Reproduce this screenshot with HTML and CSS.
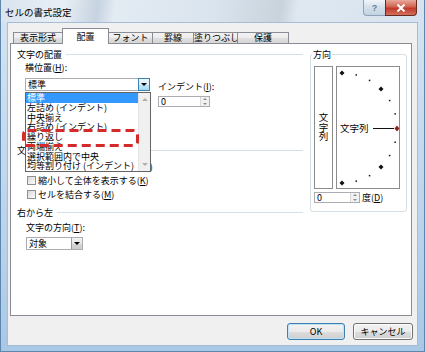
FILE: index.html
```html
<!DOCTYPE html>
<html lang="ja">
<head>
    <meta charset="UTF-8">
    <meta name="viewport" content="width=device-width, initial-scale=1.0">
    <title>セルの書式設定</title>
    <link rel="stylesheet" href="styles.css">
</head>
<body>
    <div class="window">
        <div class="titlebar">
            <span class="title">セルの書式設定</span>
            <div class="caption-buttons">
                <span class="cap-btn help">?</span>
                <span class="cap-btn close">
                    <svg width="10" height="8" viewBox="0 0 10 8"><path d="M1.5 0.5 L8.5 7.5 M8.5 0.5 L1.5 7.5" stroke="#fff" stroke-width="2"/></svg>
                </span>
            </div>
        </div>

        <div class="client">
            <div class="tabs">
                <span class="tab t1">表示形式</span>
                <span class="tab t2 active">配置</span>
                <span class="tab t3">フォント</span>
                <span class="tab t4">罫線</span>
                <span class="tab t5">塗りつぶし</span>
                <span class="tab t6">保護</span>
            </div>

            <div class="panel">
                <div class="left-col">
                    <div class="group-head"><span>文字の配置</span><i class="rule"></i></div>
                    <div class="align-row">
                        <div class="field h-align">
                            <div class="label">横位置(<u>H</u>):</div>
                            <div class="combo"><span class="value">標準</span><span class="drop hot"></span></div>
                        </div>
                        <div class="field indent">
                            <div class="label">インデント(<u>I</u>):</div>
                            <div class="spin"><span class="value">0</span><span class="spin-btn"><i class="up"></i><i class="down"></i></span></div>
                        </div>
                    </div>

                    <div class="group-head control-head"><span>文字の制御</span><i class="rule"></i></div>
                    <div class="check first"><span class="box"></span>折り返して全体を表示する(<u>W</u>)</div>
                    <div class="check"><span class="box"></span>縮小して全体を表示する(<u>K</u>)</div>
                    <div class="check"><span class="box"></span>セルを結合する(<u>M</u>)</div>

                    <div class="group-head rtl-head"><span>右から左</span><i class="rule"></i></div>
                    <div class="field dir">
                        <div class="label">文字の方向(<u>T</u>):</div>
                        <div class="combo short"><span class="value">対象</span><span class="drop"></span></div>
                    </div>
                </div>

                <fieldset class="orient">
                    <legend>方向</legend>
                    <div class="orient-body">
                        <div class="vertical"><span>文字列</span></div>
                        <div class="dial">
                            <svg width="62" height="121" viewBox="0 0 62 121">
                                <g fill="#111">
                                    <path d="M5 3.5 L7.5 6 L5 8.5 L2.5 6 Z"/>
                                    <path d="M44 19.6 L46.5 22.1 L44 24.6 L41.5 22.1 Z"/>
                                    <path d="M44 97.4 L46.5 99.9 L44 102.4 L41.5 99.9 Z"/>
                                    <path d="M5 113.5 L7.5 116 L5 118.5 L2.5 116 Z"/>
                                    <rect x="18.5" y="7.2" width="1.5" height="1.5"/>
                                    <rect x="31.8" y="12.7" width="1.5" height="1.5"/>
                                    <rect x="51.9" y="32.8" width="1.5" height="1.5"/>
                                    <rect x="57.4" y="46.1" width="1.5" height="1.5"/>
                                    <rect x="57.4" y="74.5" width="1.5" height="1.5"/>
                                    <rect x="51.9" y="87.8" width="1.5" height="1.5"/>
                                    <rect x="31.8" y="107.9" width="1.5" height="1.5"/>
                                    <rect x="18.5" y="113.4" width="1.5" height="1.5"/>
                                </g>
                                <text x="3" y="64.5" font-size="9.5" font-family="Noto Sans CJK JP, sans-serif">文字列</text>
                                <line x1="36" y1="61.5" x2="57" y2="61.5" stroke="#111" stroke-width="1"/>
                                <path d="M60 58.5 L62.5 61.5 L60 64.5 L57.5 61.5 Z" fill="#8a2020"/>
                            </svg>
                        </div>
                    </div>
                    <div class="deg-row">
                        <div class="spin deg"><span class="value">0</span><span class="spin-btn"><i class="up"></i><i class="down"></i></span></div>
                        <span class="unit">度(<u>D</u>)</span>
                    </div>
                </fieldset>

                <!-- open list of 横位置 -->
                <div class="dropdown">
                    <ul class="items">
                        <li class="selected">標準</li>
                        <li>左詰め (インデント)</li>
                        <li>中央揃え</li>
                        <li>右詰め (インデント)</li>
                        <li>繰り返し</li>
                        <li>両端揃え</li>
                        <li>選択範囲内で中央</li>
                        <li>均等割り付け (インデント)</li>
                    </ul>
                    <div class="scrollbar"><i class="arrow up"></i><i class="arrow down"></i></div>
                </div>

                <svg class="highlight" width="117" height="18" viewBox="0 0 117 18">
                    <rect x="1.5" y="1.5" width="114" height="15" rx="4" fill="none" stroke="#d42a2a" stroke-width="3" stroke-dasharray="9 5"/>
                </svg>
            </div>

            <div class="buttons">
                <button class="btn default">OK</button>
                <button class="btn cancel">キャンセル</button>
            </div>
        </div>
    </div>
</body>
</html>
```

FILE: styles.css
```css
* {
    box-sizing: border-box;
}

body {
    margin: 0;
    width: 425px;
    height: 352px;
    overflow: hidden;
    font-family: "Noto Sans CJK JP", "Liberation Sans", sans-serif;
    font-size: 9px;
    color: #000;
    background-color: #ffffff;
}

u {
    text-decoration: underline;
}

/* window frame */

.window {
    width: 425px;
    height: 352px;
    display: flex;
    flex-direction: column;
    padding: 0 6px 5px 6px;
    border: 1px solid #5f86ad;
    border-top: none;
    background: linear-gradient(180deg, #d6e4f1 0%, #bcd5ec 60%, #a9c8e6 100%);
}

.titlebar {
    height: 22px;
    margin: 0 -6px;
    padding: 0 7px 0 4px;
    display: flex;
    justify-content: space-between;
    align-items: flex-start;
    background: linear-gradient(100deg, #d9e4ef 0%, #e8eef5 15%, #c6d3e0 23%, #e3ebf3 27%, #dae4ee 50%, #c9d3dc 66%, #dfe8f1 70%, #d6e2ee 100%);
}

.title {
    margin-top: 7px;
    font-size: 9.5px;
    line-height: 11px;
}

.caption-buttons {
    display: flex;
}

.cap-btn {
    height: 16px;
    display: flex;
    align-items: center;
    justify-content: center;
}

.help {
    width: 22px;
    border: 1px solid #8ea3b9;
    border-top: none;
    border-right: none;
    border-radius: 0 0 0 4px;
    background: linear-gradient(#f1f5f9, #d3dfea 50%, #c3d3e3);
    color: #6d7f92;
    font-family: "Liberation Sans", sans-serif;
    font-weight: bold;
    font-size: 9px;
}

.close {
    width: 32px;
    border: 1px solid #6b2a20;
    border-top: none;
    border-radius: 0 0 4px 0;
    background: linear-gradient(#e9a99b, #d0634f 45%, #c0392b 55%, #d2705c);
}

.close svg {
    display: block;
}

/* client area */

.client {
    flex: 1;
    display: flex;
    flex-direction: column;
    padding: 5px 5px 0 2px;
    border: 1px solid #a5bdd6;
    background-color: #f0f0f0;
}

.tabs {
    display: flex;
    align-items: flex-end;
    height: 15px;
    padding-left: 3px;
}

.tab {
    height: 11px;
    margin-right: -1px;
    border: 1px solid #898c95;
    border-bottom: none;
    line-height: 10px;
    text-align: center;
    white-space: nowrap;
    background: linear-gradient(#f3f3f3, #ebebeb 50%, #dfdfdf 51%, #d6d6d6);
}

.t1 { width: 50px; }
.t2 { width: 47px; }
.t3 { width: 45px; }
.t4 { width: 42px; }
.t5 { width: 45px; }
.t6 { width: 52px; }

.tab.active {
    position: relative;
    z-index: 1;
    height: 16px;
    margin-bottom: -1px;
    padding-top: 3px;
    background: #ffffff;
}

.panel {
    position: relative;
    height: 273px;
    display: flex;
    gap: 7px;
    padding: 5px 4px 0 6px;
    border: 1px solid #898c95;
    background-color: #ffffff;
}

.left-col {
    width: 286px;
    flex: none;
}

.group-head {
    display: flex;
    align-items: center;
    height: 11px;
    line-height: 11px;
    white-space: nowrap;
}

.rule {
    flex: 1;
    height: 0;
    margin-left: 4px;
    border-top: 1px solid #d5dfe5;
}

.label {
    height: 11px;
    line-height: 11px;
    white-space: nowrap;
}

.align-row {
    display: flex;
    margin: 2px 0 0 8px;
}

.h-align {
    width: 125px;
}

.indent {
    width: 52px;
    margin: 19px 0 0 8px;
}

.combo {
    display: flex;
    height: 13px;
    margin-top: 5px;
    border: 1px solid #abadb3;
    background: #ffffff;
}

.combo .value {
    flex: 1;
    padding-left: 2px;
    line-height: 11px;
}

.drop {
    width: 11px;
    display: flex;
    align-items: center;
    justify-content: center;
    border-left: 1px solid #9a9a9a;
    background: linear-gradient(#f2f2f2, #e6e6e6 50%, #d6d6d6 51%, #cbcbcb);
}

.drop::after {
    content: "";
    border-left: 3px solid transparent;
    border-right: 3px solid transparent;
    border-top: 3px solid #000;
}

.drop.hot {
    border: 1px solid #3c7fb1;
    margin: -1px -1px -1px 0;
    width: 12px;
    background: linear-gradient(#eaf6fd, #d9f0fc 50%, #bee6fd 51%, #a7d9f5);
}

.spin {
    display: flex;
    height: 11px;
    margin-top: 4px;
    border: 1px solid #abadb3;
    background: #ffffff;
}

.spin .value {
    flex: 1;
    padding-left: 2px;
    line-height: 9px;
}

.spin-btn {
    width: 9px;
    display: flex;
    flex-direction: column;
    align-items: center;
    justify-content: space-around;
    border-left: 1px solid #d8d8d8;
    background: #f2f2f2;
}

.spin-btn .up {
    border-left: 2px solid transparent;
    border-right: 2px solid transparent;
    border-bottom: 2px solid #8a8a8a;
}

.spin-btn .down {
    border-left: 2px solid transparent;
    border-right: 2px solid transparent;
    border-top: 2px solid #8a8a8a;
}

.control-head {
    margin-top: 38px;
}

.check {
    display: flex;
    align-items: center;
    height: 14px;
    margin-left: 10px;
    white-space: nowrap;
}

.check.first {
    margin-top: 3px;
    letter-spacing: -0.5px;
}

.box {
    width: 9px;
    height: 9px;
    margin-right: 2px;
    border: 1px solid #8f8f8f;
    background: linear-gradient(135deg, #d8d8d8, #fbfbfb);
}

.rtl-head {
    margin-top: 6px;
}

.dir {
    margin: 4px 0 0 9px;
}

.dir .combo {
    margin-top: 4px;
}

.combo.short {
    width: 57px;
}

/* orientation box */

.orient {
    width: 97px;
    min-width: 0;
    margin: 0;
    padding: 6px 6px 8px 3px;
    align-self: flex-start;
    border: 1px solid #d5dfe5;
    border-radius: 3px;
}

.orient legend {
    margin-left: -2px;
    padding: 0 1px;
    line-height: 11px;
}

.orient-body {
    display: flex;
    gap: 3px;
    height: 123px;
}

.vertical {
    width: 19px;
    display: flex;
    align-items: center;
    justify-content: center;
    border: 1px solid #8c8c8c;
}

.vertical span {
    writing-mode: vertical-rl;
    text-orientation: upright;
    font-size: 9.5px;
    line-height: 10px;
}

.dial {
    width: 64px;
    border: 1px solid #8c8c8c;
}

.dial svg {
    display: block;
}

.deg-row {
    display: flex;
    align-items: center;
    height: 11px;
    margin-top: 3px;
}

.spin.deg {
    width: 46px;
    margin-top: 0;
}

.unit {
    margin-left: 2px;
    white-space: nowrap;
}

/* open drop-down list */

.dropdown {
    position: absolute;
    left: 14px;
    top: 48px;
    width: 126px;
    height: 80px;
    display: flex;
    border: 1px solid #646464;
    background: #ffffff;
    z-index: 2;
}

.items {
    flex: 1;
    margin: 0;
    padding: 0;
    list-style: none;
    overflow: hidden;
}

.items li {
    height: 9.75px;
    line-height: 9.75px;
    padding-left: 1px;
    white-space: nowrap;
}

.items li.selected {
    background-color: #3399ff;
    color: #ffffff;
}

.scrollbar {
    width: 12px;
    display: flex;
    flex-direction: column;
    align-items: center;
    justify-content: space-between;
    padding: 5px 0;
    border-left: 1px solid #e4e4e4;
    background: #f0f0f0;
}

.arrow.up {
    border-left: 3px solid transparent;
    border-right: 3px solid transparent;
    border-bottom: 3px solid #b0b0b0;
}

.arrow.down {
    border-left: 3px solid transparent;
    border-right: 3px solid transparent;
    border-top: 3px solid #b0b0b0;
}

.highlight {
    position: absolute;
    left: 11px;
    top: 85px;
    z-index: 3;
}

/* dialog buttons */

.buttons {
    display: flex;
    justify-content: flex-end;
    gap: 8px;
    margin-top: 7px;
    margin-right: -1px;
}

.btn {
    height: 17px;
    padding: 0;
    font-family: inherit;
    font-size: 9px;
    color: #000;
    border: 1px solid #707070;
    border-radius: 3px;
    background: linear-gradient(#f2f2f2, #ebebeb 50%, #dddddd 51%, #cfcfcf);
    box-shadow: inset 0 0 0 1px #fcfcfc;
}

.btn.default {
    width: 58px;
    border-color: #3c7fb1;
    box-shadow: inset 0 0 0 1px #bfe3f5;
}

.btn.cancel {
    width: 60px;
}
```
